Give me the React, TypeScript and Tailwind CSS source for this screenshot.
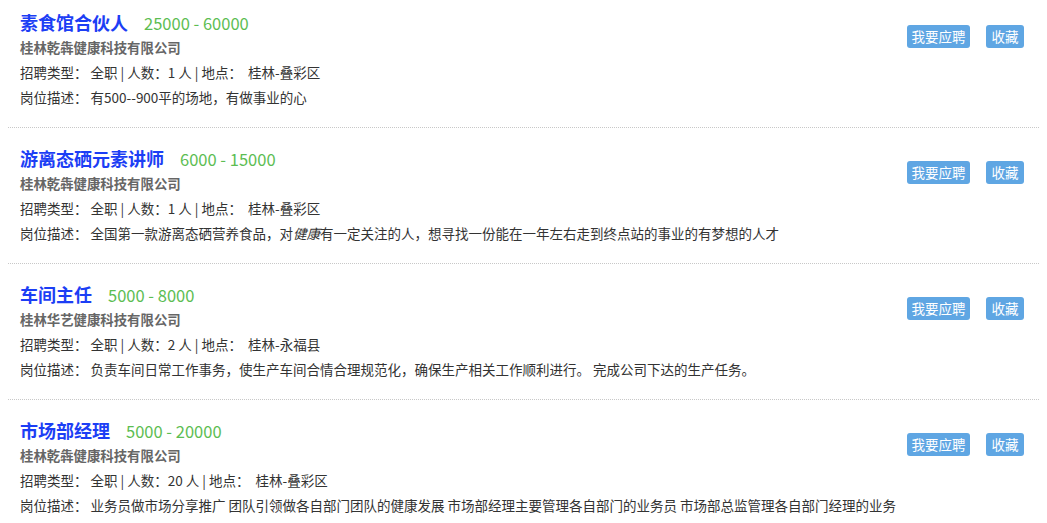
import React from "react";

type Job = {
  title: string;
  salary: string;
  company: string;
  count: string;
  place: string;
  desc: React.ReactNode;
};

const jobs: Job[] = [
  {
    title: "素食馆合伙人",
    salary: "25000 - 60000",
    company: "桂林乾犇健康科技有限公司",
    count: "1",
    place: "桂林-叠彩区",
    desc: "有500--900平的场地，有做事业的心",
  },
  {
    title: "游离态硒元素讲师",
    salary: "6000 - 15000",
    company: "桂林乾犇健康科技有限公司",
    count: "1",
    place: "桂林-叠彩区",
    desc: (
      <>
        全国第一款游离态硒营养食品，对<em>健康</em>有一定关注的人，想寻找一份能在一年左右走到终点站的事业的有梦想的人才
      </>
    ),
  },
  {
    title: "车间主任",
    salary: "5000 - 8000",
    company: "桂林华艺健康科技有限公司",
    count: "2",
    place: "桂林-永福县",
    desc: "负责车间日常工作事务，使生产车间合情合理规范化，确保生产相关工作顺利进行。 完成公司下达的生产任务。",
  },
  {
    title: "市场部经理",
    salary: "5000 - 20000",
    company: "桂林乾犇健康科技有限公司",
    count: "20",
    place: "桂林-叠彩区",
    desc: "业务员做市场分享推广 团队引领做各自部门团队的健康发展 市场部经理主要管理各自部门的业务员 市场部总监管理各自部门经理的业务",
  },
];

const JobRow = ({ job }: { job: Job }) => {
  return (
    <div className="flex justify-between border-b border-dotted border-[#c8c8c8] pl-3 pr-[15px] pt-[17px] pb-[18px] first:pt-[9px]">
      <div className="flex flex-col">
        {/* 标题 + 薪资 */}
        <div className="flex items-baseline h-[26px] leading-[26px]">
          <span className="text-[18px] font-bold text-[#1c3ef5]">{job.title}</span>
          <span className="ml-4 text-[16.5px] text-[#5cbd52]">{job.salary}</span>
        </div>
        <div className="h-[24px] leading-[24px] text-[13.4px] font-bold text-[#666]">{job.company}</div>
        <div className="h-[26px] leading-[26px] text-[13.5px] text-[#333]">
          招聘类型： 全职 | 人数：{job.count} 人 | 地点：&nbsp; {job.place}
        </div>
        <div className="h-[24px] leading-[24px] text-[13.5px] text-[#333]">
          岗位描述： {job.desc}
        </div>
      </div>
      <div className="flex items-start gap-4 pt-4">
        <button className="h-[23px] w-[63px] rounded-[3px] bg-[#5fa6e3] text-[13.5px] text-white">我要应聘</button>
        <button className="h-[23px] w-[38px] rounded-[3px] bg-[#5fa6e3] text-[13.5px] text-white">收藏</button>
      </div>
    </div>
  );
};

export default function App() {
  return (
    <div
      className="w-[1047px] h-[523px] overflow-hidden bg-white px-2"
      style={{ fontFamily: '"Noto Sans CJK SC", "Liberation Sans", sans-serif' }}
    >
      {jobs.map((job) => (
        <JobRow key={job.title} job={job} />
      ))}
    </div>
  );
}
